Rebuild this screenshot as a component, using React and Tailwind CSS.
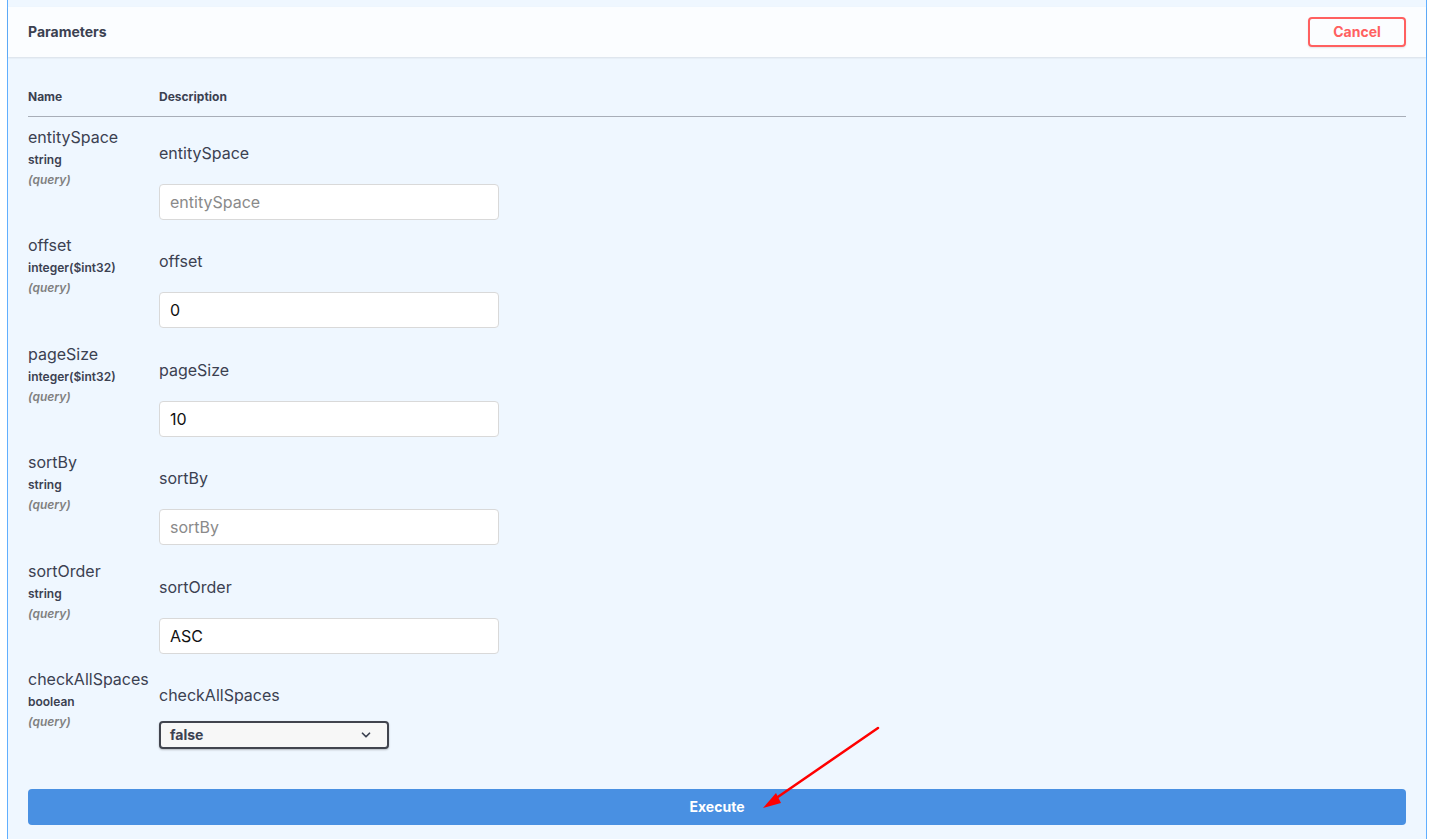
import { ChevronDown } from 'lucide-react';

const params = [
  { name: 'entitySpace', type: 'string', value: '', placeholder: 'entitySpace' },
  { name: 'offset', type: 'integer($int32)', value: '0', placeholder: 'offset' },
  { name: 'pageSize', type: 'integer($int32)', value: '10', placeholder: 'pageSize' },
  { name: 'sortBy', type: 'string', value: '', placeholder: 'sortBy' },
  { name: 'sortOrder', type: 'string', value: 'ASC', placeholder: 'sortOrder' },
];

function NameCell({ name, type }) {
  return (
    <div className="w-[131px] shrink-0 pt-[10px]">
      <div className="text-base leading-5 text-[#3b4151]">{name}</div>
      <div className="mt-[5px] text-xs leading-4 font-semibold text-[#3b4151]">{type}</div>
      <div className="mt-[4px] text-xs leading-4 font-semibold italic text-[#808080]">(query)</div>
    </div>
  );
}

export default function App() {
  return (
    <div className="relative min-h-screen bg-white font-['Inter',sans-serif] text-[#3b4151]">
      <div className="ml-[7px] mr-[3px] min-h-[839px] border-x border-[#61affe] bg-[#eff7ff] pt-[7px]">
        {/* section header */}
        <div className="flex h-[50px] items-center justify-between bg-[#fbfdff] px-5 shadow-[0_1px_2px_rgba(0,0,0,0.1)]">
          <h4 className="text-sm font-bold text-[#3b4151]">Parameters</h4>
          <button className="mt-[-1px] h-[30px] w-[98px] rounded border-2 border-[#ff6060] bg-transparent text-sm font-bold text-[#ff6060] shadow-[0_1px_2px_rgba(0,0,0,0.1)]">
            Cancel
          </button>
        </div>

        {/* table */}
        <div className="px-5 pt-5">
          <div className="flex h-[40px] items-end border-b border-[#a8aeb8] pb-[11px] text-xs font-bold">
            <div className="w-[131px] shrink-0">Name</div>
            <div>Description</div>
          </div>

          {params.map((p) => (
            <div key={p.name} className="flex h-[108.4px]">
              <NameCell name={p.name} type={p.type} />
              <div className="pt-[26px]">
                <div className="text-base leading-5">{p.name}</div>
                <input
                  readOnly
                  value={p.value}
                  placeholder={p.placeholder}
                  className="mt-[21px] h-9 w-[340px] rounded border border-[#d9d9d9] bg-white px-[10px] text-base text-[#111] placeholder-[#8a8a8a] outline-none"
                />
              </div>
            </div>
          ))}

          <div className="flex h-[110px]">
            <NameCell name="checkAllSpaces" type="boolean" />
            <div className="pt-[26px]">
              <div className="text-base leading-5">checkAllSpaces</div>
              <div className="mt-[16px] flex h-[28px] w-[230px] items-center justify-between rounded border-2 border-[#41444e] bg-[#f7f7f7] pl-[9px] pr-[14px] shadow-[0_1px_2px_rgba(0,0,0,0.25)]">
                <span className="text-sm font-bold text-[#3b4151]">false</span>
                <ChevronDown size={14} strokeWidth={3} className="text-[#3b4151]" />
              </div>
            </div>
          </div>

          <button className="mt-[20px] h-9 w-full rounded bg-[#4990e2] text-sm font-bold text-white">
            Execute
          </button>
        </div>
      </div>

      {/* annotation arrow */}
      <svg className="pointer-events-none absolute left-0 top-0" width="1430" height="839">
        <line x1="878" y1="728" x2="772" y2="801" stroke="#ff0000" strokeWidth="2.5" strokeLinecap="round" />
        <polygon points="763,808 776,793 781,803" fill="#ff0000" />
      </svg>
    </div>
  );
}
